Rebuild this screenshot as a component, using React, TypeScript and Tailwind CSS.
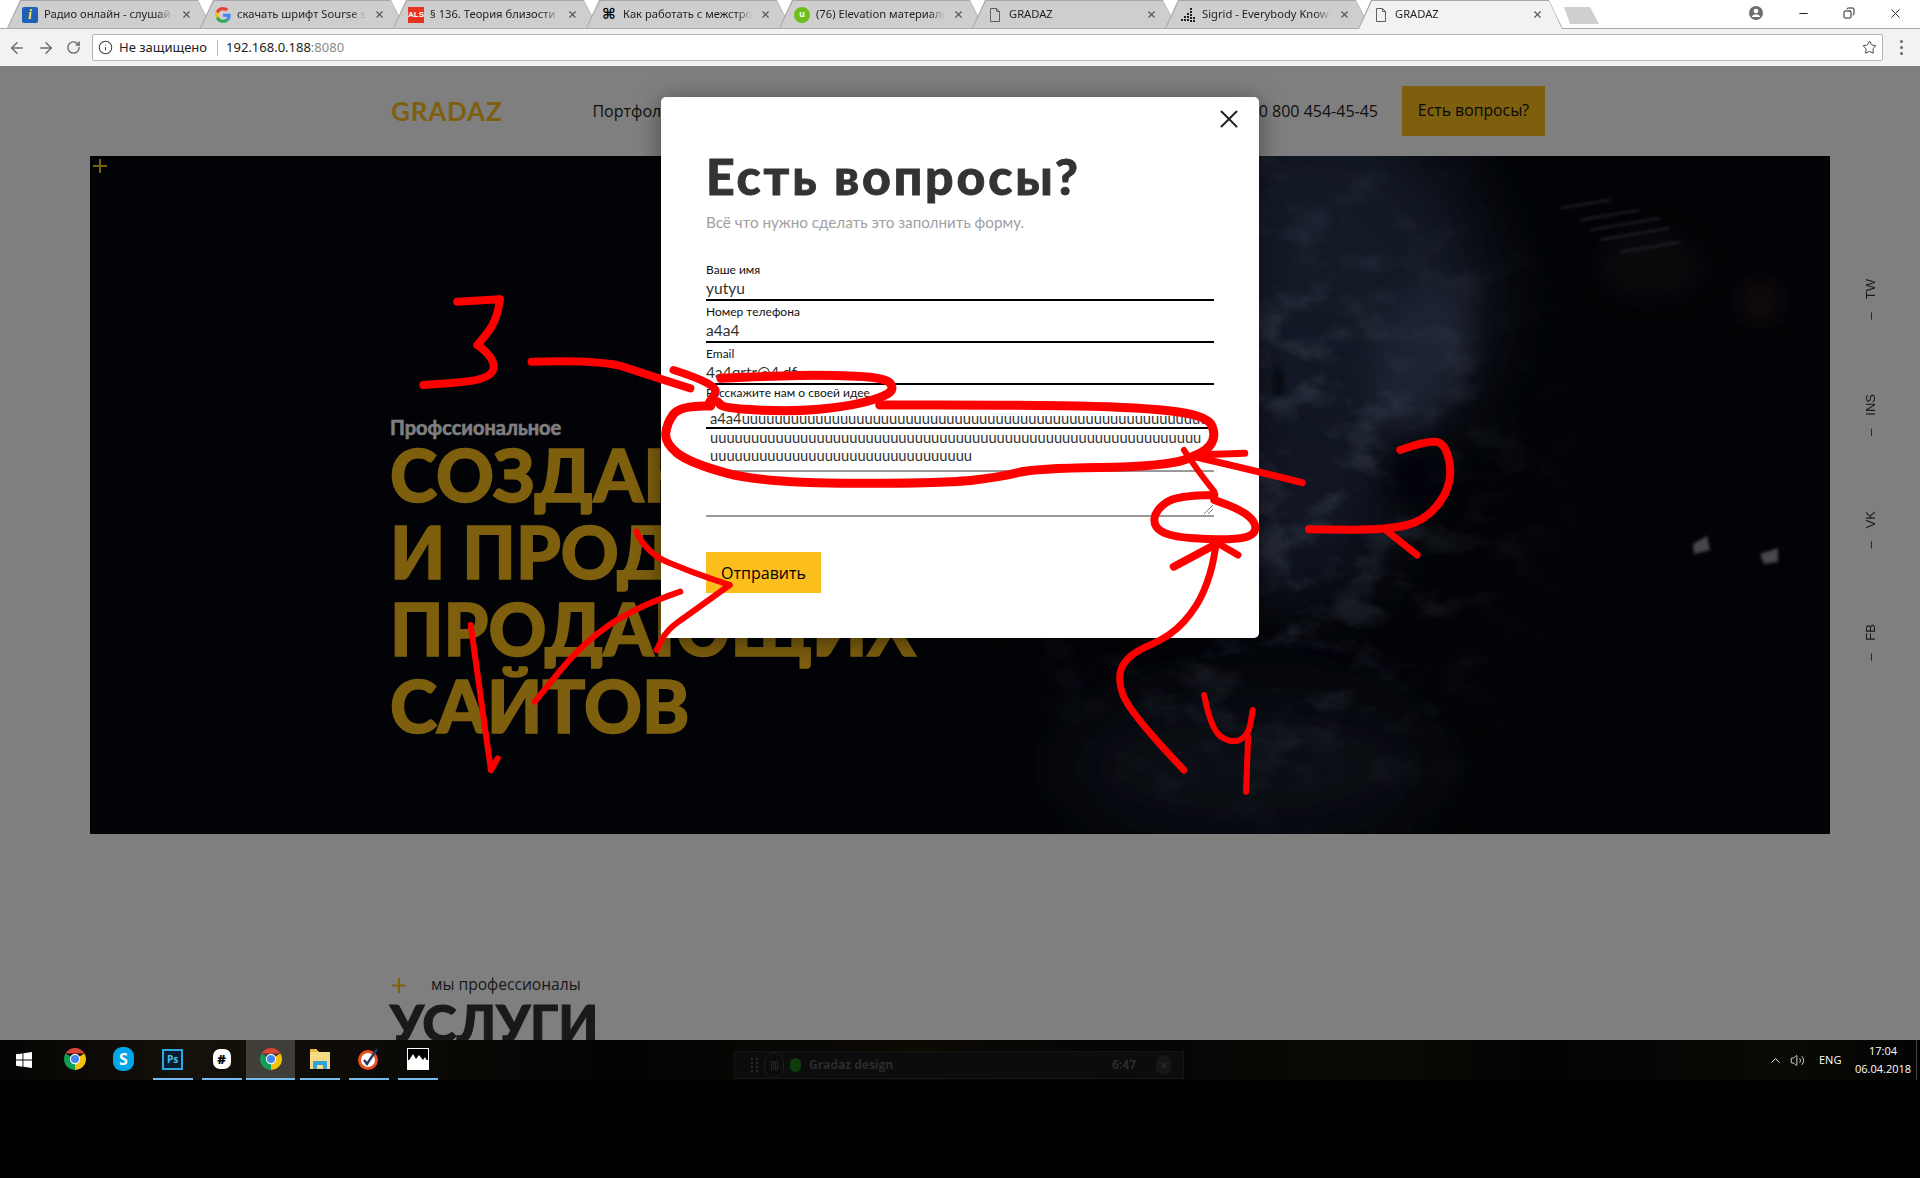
import React from "react";
import { ArrowLeft, ArrowRight, RotateCw, Info, Star, X, Minus, Copy, Volume2, ChevronUp, Pause } from "lucide-react";

const ChromeIcon = ({ s = 22 }: { s?: number }) => (
  <svg width={s} height={s} viewBox="0 0 24 24">
    <path d="M1.61 6A12 12 0 0 1 22.39 6H12Z" fill="#db4437" />
    <path d="M22.39 6A12 12 0 0 1 12 24L12 12Z" fill="#f4c20d" />
    <path d="M12 24A12 12 0 0 1 1.61 6L12 12Z" fill="#0f9d58" />
    <circle cx="12" cy="12" r="5.6" fill="#fff" />
    <circle cx="12" cy="12" r="4.4" fill="#4285f4" />
  </svg>
);

const DocIcon = () => (
  <svg width="16" height="16" viewBox="0 0 16 16" fill="none" stroke="#5f5f5f" strokeWidth="1">
    <path d="M3.5 1.5h6l3 3v10h-9z" />
    <path d="M9.5 1.5v3h3" />
  </svg>
);

const GoogleIcon = () => (
  <svg width="16" height="16" viewBox="0 0 48 48">
    <path fill="#EA4335" d="M24 9.5c3.5 0 6.6 1.2 9.1 3.600l6.800-6.800C35.800 2.400 30.300 0 24 0 14.600 0 6.500 5.400 2.600 13.200l7.900 6.200C12.400 13.600 17.700 9.500 24 9.500z" />
    <path fill="#4285F4" d="M46.900 24.500c0-1.600-.1-3.100-.4-4.500H24v9h12.900c-.6 3-2.200 5.500-4.700 7.200l7.700 6c4.500-4.200 7-10.300 7-17.700z" />
    <path fill="#FBBC05" d="M10.500 28.600c-.5-1.400-.8-3-.8-4.600s.3-3.200.8-4.600l-7.900-6.200C.9 16.500 0 20.100 0 24s.9 7.500 2.600 10.800l7.900-6.200z" />
    <path fill="#34A853" d="M24 48c6.500 0 11.900-2.100 15.900-5.800l-7.700-6c-2.200 1.400-4.900 2.300-8.200 2.300-6.300 0-11.600-4.200-13.500-9.900l-7.900 6.200C6.500 42.600 14.600 48 24 48z" />
  </svg>
);

const tabIcons: React.ReactNode[] = [
  <div className="w-[16px] h-[16px] rounded-[2px] bg-[#1f5fb8] flex items-center justify-center text-[#ffe23a] text-[14px] font-bold italic leading-none font-['Liberation_Serif',serif]">i</div>,
  <GoogleIcon />,
  <div className="w-[16px] h-[16px] bg-[#e8321e] flex items-center justify-center text-white text-[8px] font-bold leading-none font-['Liberation_Sans',sans-serif]">ALS</div>,
  <div className="w-[16px] h-[16px] flex items-center justify-center text-black text-[15px] font-bold leading-none font-['DejaVu_Sans',sans-serif]">⌘</div>,
  <div className="w-[16px] h-[16px] rounded-full bg-[#6fbe1e] flex items-center justify-center text-white text-[9px] font-bold leading-none font-['Liberation_Sans',sans-serif]">u</div>,
  <DocIcon />,
  <svg width="16" height="16" viewBox="0 0 16 16" fill="#222">
    <rect x="1" y="12" width="2" height="2" /><rect x="4" y="9" width="2" height="2" /><rect x="4" y="12" width="2" height="2" />
    <rect x="7" y="6" width="2" height="2" /><rect x="7" y="9" width="2" height="2" /><rect x="7" y="12" width="2" height="2" />
    <rect x="10" y="1" width="2" height="2" /><rect x="10" y="4" width="2" height="2" /><rect x="10" y="7" width="2" height="2" /><rect x="10" y="10" width="2" height="2" /><rect x="10" y="13" width="2" height="2" />
    <rect x="13" y="10" width="2" height="2" /><rect x="13" y="13" width="2" height="2" />
  </svg>,
  <DocIcon />,
];

const tabs = [
  "Радио онлайн - слушай бесплатно",
  "скачать шрифт Sourse sans pro",
  "§ 136. Теория близости",
  "Как работать с межстрочным",
  "(76) Elevation материальный",
  "GRADAZ",
  "Sigrid - Everybody Knows",
  "GRADAZ",
];

function Tab({ title, icon, active }: { title: string; icon: React.ReactNode; active?: boolean }) {
  return (
    <div className={`relative w-[205px] -mr-[12px] shrink-0 ${active ? "h-[29px] z-10" : "h-[28px]"}`}>
      <div className="absolute inset-0 bg-[#a8a8a8] [clip-path:polygon(0_100%,13px_0,191px_0,205px_100%)]" />
      <div className={`absolute top-[1px] left-[1px] right-[1px] bottom-0 [clip-path:polygon(0_100%,13px_0,190px_0,203px_100%)] ${active ? "bg-[#f2f2f2]" : "bg-[#cecece]"}`} />
      <div className="relative flex items-center h-[28px] pt-[1px] pl-[15px]">
        <div className="w-[16px] h-[16px] shrink-0 flex items-center justify-center">{icon}</div>
        <div className="ml-[6px] w-[129px] whitespace-nowrap overflow-hidden text-[11.2px] text-[#1f1f1f] font-['Noto_Sans',sans-serif] [mask-image:linear-gradient(to_right,black_88%,transparent)]">{title}</div>
        <X size={11} strokeWidth={2.4} className="ml-[8px] text-[#555]" />
      </div>
    </div>
  );
}

function Browser() {
  return (
    <div className="shrink-0">
      <div className="h-[29px] bg-white border-b border-[#a8a8a8] flex pl-[7px]">
        {tabs.map((t, i) => (
          <Tab key={i} title={t} icon={tabIcons[i]} active={i === 7} />
        ))}
        <div className="ml-[13px] mt-[7px] w-[35px] h-[17px] bg-[#cfcfcf] [clip-path:polygon(0_0,26px_0,35px_100%,6px_100%)]" />
        <div className="ml-auto flex h-[26px] pr-[2px] items-center text-[#222]">
          <div className="w-[48px] flex justify-center">
            <svg width="14" height="14" viewBox="0 0 14 14">
              <circle cx="7" cy="7" r="7" fill="#6e6e6e" />
              <circle cx="7" cy="5" r="2.3" fill="#fff" />
              <path d="M2.800 11c.6-2 2.400-2.800 4.200-2.800s3.600.8 4.200 2.800z" fill="#fff" />
            </svg>
          </div>
          <div className="w-[46px] flex justify-center"><Minus size={13} strokeWidth={2} /></div>
          <div className="w-[46px] flex justify-center"><Copy size={12} strokeWidth={2} className="-scale-x-100" /></div>
          <div className="w-[46px] flex justify-center"><X size={15} strokeWidth={1.5} /></div>
        </div>
      </div>
      <div className="h-[37px] bg-[#f2f2f2] flex items-center font-['Noto_Sans',sans-serif]">
        <div className="w-[92px] flex items-center pl-[8px] gap-[11px] text-[#6b6b6b]">
          <ArrowLeft size={18} strokeWidth={2} />
          <ArrowRight size={18} strokeWidth={2} />
          <RotateCw size={15} strokeWidth={2.2} />
        </div>
        <div className="w-[1791px] h-[27px] bg-white border border-[#b4b4b4] rounded-[2px] flex items-center pl-[5px] pr-[5px]">
          <Info size={15} strokeWidth={1.7} className="text-[#444]" />
          <span className="ml-[6px] text-[13px] text-[#222]">Не защищено</span>
          <span className="ml-[10px] w-px h-[16px] bg-[#bdbdbd]" />
          <span className="ml-[8px] text-[13px] text-[#222]">192.168.0.188<span className="text-[#8a8a8a]">:8080</span></span>
          <Star size={15} strokeWidth={1.6} className="ml-auto text-[#444]" />
        </div>
        <div className="ml-[17px] flex flex-col gap-[3px]">
          <span className="w-[3px] h-[3px] rounded-full bg-[#666]" />
          <span className="w-[3px] h-[3px] rounded-full bg-[#666]" />
          <span className="w-[3px] h-[3px] rounded-full bg-[#666]" />
        </div>
      </div>
    </div>
  );
}

function HeroTexture() {
  return (
    <svg className="absolute inset-0 w-full h-full" viewBox="0 0 1740 678" preserveAspectRatio="none">
      <defs>
        <filter id="b40" x="-50%" y="-50%" width="200%" height="200%"><feGaussianBlur stdDeviation="38" /></filter>
        <filter id="b14" x="-50%" y="-50%" width="200%" height="200%"><feGaussianBlur stdDeviation="14" /></filter>
        <filter id="b2" x="-50%" y="-50%" width="200%" height="200%"><feGaussianBlur stdDeviation="1.500" /></filter>
        <filter id="noise" x="0" y="0" width="100%" height="100%">
          <feTurbulence type="fractalNoise" baseFrequency="0.02 0.03" numOctaves="5" seed="7" />
          <feColorMatrix values="0 0 0 0 0.26  0 0 0 0 0.32  0 0 0 0 0.48  3.600 0 0 0 -1.750" />
        </filter>
        <radialGradient id="fade" cx="0.5" cy="0.5" r="0.5">
          <stop offset="0.3" stopColor="#fff" />
          <stop offset="1" stopColor="#000" />
        </radialGradient>
        <mask id="m"><ellipse cx="1180" cy="300" rx="320" ry="430" fill="url(#fade)" /></mask>
      </defs>
      <ellipse cx="1210" cy="140" rx="190" ry="190" fill="#28324c" filter="url(#b40)" />
      <ellipse cx="1180" cy="340" rx="130" ry="110" fill="#232c44" filter="url(#b40)" />
      <ellipse cx="1160" cy="610" rx="190" ry="80" fill="#151b2a" filter="url(#b40)" />
      <ellipse cx="1330" cy="195" rx="45" ry="75" fill="#3a4562" filter="url(#b14)" transform="rotate(20 1330 195)" />
      <ellipse cx="1670" cy="145" rx="18" ry="18" fill="#3e2229" filter="url(#b14)" opacity="0.8" />
      <ellipse cx="1560" cy="110" rx="50" ry="30" fill="#251b21" filter="url(#b14)" opacity="0.6" />
      <rect width="1740" height="678" fill="#000" filter="url(#noise)" mask="url(#m)" opacity="0.35" />
      <ellipse cx="1325" cy="322" rx="30" ry="26" fill="#030308" filter="url(#b14)" />
      <ellipse cx="1188" cy="225" rx="6" ry="15" fill="#05070d" filter="url(#b2)" opacity="0.5" />
      <g stroke="#8c8ea4" strokeWidth="1.500" opacity="0.6" filter="url(#b2)" fill="none">
        <path d="M1490 64l60-10" /><path d="M1500 74l70-12" /><path d="M1510 84l70-12" /><path d="M1530 96l60-10" /><path d="M1470 52l50-8" />
      </g>
      <path d="M1603 388l14-8 3 14-16 4z" fill="#b9bccb" filter="url(#b2)" opacity="0.75" />
      <path d="M1670 398l18-6 0 14-14 2z" fill="#b9bccb" filter="url(#b2)" opacity="0.75" />
      <path d="M1155 124l12 4 0 10-12-2z" fill="#9da3b8" filter="url(#b2)" opacity="0.6" />
    </svg>
  );
}

function Page() {
  return (
    <div className="relative h-[974px] overflow-hidden bg-white font-['Open_Sans',sans-serif]">
      <header className="h-[90px] flex items-center pl-[391px] pr-[375px]">
        <span className="text-[26px] leading-none font-bold tracking-[0.8px] text-[#fcbe1c] font-['Lato',sans-serif]">GRADAZ</span>
        <span className="ml-[90px] text-[16px] text-[#222]">Портфолио</span>
        <span className="ml-auto text-[16px] text-[#222]">+38 0 800 454-45-45</span>
        <span className="ml-[24px] w-[143px] h-[50px] flex items-center justify-center bg-[#fcbe1c] text-[15.800px] text-[#111]">Есть вопросы?</span>
      </header>
      <div className="flex">
        <section className="relative ml-[90px] w-[1740px] h-[678px] bg-[#05060c] overflow-hidden">
          <HeroTexture />
          <span className="absolute left-[2px] top-[2px] text-[#fcbe1c]">
            <svg width="16" height="16" viewBox="0 0 16 16" stroke="currentColor" strokeWidth="2"><path d="M8 1v14M1 8h14" /></svg>
          </span>
          <div className="relative pl-[300px] pt-[257px] font-['Lato',sans-serif]">
            <div className="text-[20px] leading-[28px] font-bold text-white [-webkit-text-stroke:0.5px_#fff]">Профссиональное</div>
            <div className="-mt-[5px] text-[71.500px] leading-[77px] font-black text-[#fcbe1c] [-webkit-text-stroke:1.5px_#fcbe1c] whitespace-nowrap">
              <div>СОЗДАНИЕ</div>
              <div>И ПРОДВИЖЕНИЕ</div>
              <div>ПРОДАЮЩИХ</div>
              <div>САЙТОВ</div>
            </div>
          </div>
        </section>
        <aside className="w-[90px] pr-[10px] flex flex-col items-center gap-[75px] pt-[123px] text-[13px] text-[#333] font-['Liberation_Sans',sans-serif]">
          {["TW", "INS", "VK", "FB"].map((s) => (
            <span key={s} className="[writing-mode:vertical-rl] rotate-180 leading-none whitespace-nowrap">
              <span className="me-[13px]">–</span>{s}
            </span>
          ))}
        </aside>
      </div>
      <div className="pl-[392px] pt-[141px]">
        <div className="flex items-center h-[20px]">
          <svg width="14" height="15" viewBox="0 0 14 15" stroke="#fcbe1c" strokeWidth="2"><path d="M7 0v15M0 7.500h14" /></svg>
          <span className="ml-[25px] text-[15.600px] text-[#333]">мы профессионалы</span>
        </div>
        <div className="-ml-[2px] mt-[2px] text-[52px] leading-[50px] font-black text-[#333] [-webkit-text-stroke:1px_#333] font-['Lato',sans-serif]">УСЛУГИ</div>
      </div>
      <div className="absolute inset-0 bg-black/50 flex justify-center pt-[31px]">
        <Modal />
      </div>
    </div>
  );
}

function Field({ label, value }: { label: string; value: string }) {
  return (
    <div className="h-[42px] flex flex-col pt-[3px]">
      <div className="h-[16px] text-[12px] leading-[15px] text-[#111] whitespace-nowrap">{label}</div>
      <div className="h-[21px] text-[15.500px] leading-[21px] text-[#333] border-b-2 border-black box-content">{value}</div>
    </div>
  );
}

function Modal() {
  return (
    <div className="w-[598px] h-[541px] bg-white rounded-[5px] shadow-[0_4px_24px_rgba(0,0,0,0.45)] relative px-[45px] pt-[54px] font-['Lato',sans-serif]">
      <X size={30} strokeWidth={1.6} className="absolute right-[15px] top-[7px] text-[#222]" />
      <h1 className="text-[50px] leading-[50px] font-black tracking-[2.8px] text-[#333] [-webkit-text-stroke:0.8px_#333] whitespace-nowrap">Есть вопросы?</h1>
      <p className="mt-[10px] h-[22px] text-[15.200px] leading-[22px] text-[#a0a0a0]">Всё что нужно сделать это заполнить форму.</p>
      <div className="mt-[28px] -mb-[2px]" />
      <Field label="Ваше имя" value="yutyu" />
      <Field label="Номер телефона" value="a4a4" />
      <Field label="Email" value="4a4qrtr@4.df" />
      <div>
        <div className="h-[16px] text-[12px] leading-[16px] text-[#111]">Расскажите нам о своей идее</div>
        <div className="mt-[8px] h-[18px] pl-[4px] text-[14.700px] leading-[18px] text-[#333] border-b-2 border-black box-content whitespace-nowrap overflow-hidden">a4a4uuuuuuuuuuuuuuuuuuuuuuuuuuuuuuuuuuuuuuuuuuuuuuuuuuuuuuuuu</div>
        <div className="pl-[4px] text-[14.700px] leading-[17.500px] text-[#333] border-b-2 border-[#999] h-[41px] box-content whitespace-nowrap">
          <div>uuuuuuuuuuuuuuuuuuuuuuuuuuuuuuuuuuuuuuuuuuuuuuuuuuuuuuuuuuuu</div>
          <div>uuuuuuuuuuuuuuuuuuuuuuuuuuuuuuuu</div>
        </div>
        <div className="relative h-[43px] border-b-2 border-[#999] box-content">
          <svg className="absolute right-[1px] bottom-[1px]" width="9" height="9" viewBox="0 0 9 9" stroke="#555" strokeWidth="0.8"><path d="M0 9L9 0M4 9L9 4" /></svg>
        </div>
      </div>
      <button className="mt-[35px] w-[115px] h-[41px] bg-[#fcbe1c] text-[16px] text-black font-['Open_Sans',sans-serif]">Отправить</button>
    </div>
  );
}

const smooth = (p: number[][]) => {
  let d = `M${p[0][0]} ${p[0][1]}`;
  for (let i = 1; i < p.length - 1; i++) {
    const mx = (p[i][0] + p[i + 1][0]) / 2;
    const my = (p[i][1] + p[i + 1][1]) / 2;
    d += ` Q${p[i][0]} ${p[i][1]} ${mx} ${my}`;
  }
  const l = p[p.length - 1];
  return d + ` L${l[0]} ${l[1]}`;
};

const strokes: { w: number; p: number[][] }[] = [
  { w: 8, p: [[55, 35], [118, 28]] },
  { w: 8, p: [[118, 28], [115, 90], [85, 165]] },
  { w: 8, p: [[85, 165], [112, 205], [105, 270], [5, 285]] },
  { w: 8, p: [[165, 215], [270, 210], [330, 250], [400, 295]] },
  { w: 8, p: [[375, 240], [445, 285], [428, 335]] },
  { w: 9, p: [[445, 265], [520, 258], [600, 255], [690, 262], [702, 300], [680, 325], [630, 350], [550, 365], [450, 355], [440, 335]] },
  { w: 9, p: [[430, 348], [385, 345], [365, 400], [362, 460], [400, 520], [510, 580], [780, 580], [860, 560], [910, 535], [1100, 530], [1160, 490], [1178, 440], [1165, 375], [1050, 350], [850, 345], [680, 345]] },
  { w: 7, p: [[1305, 578], [1240, 545], [1145, 500]] },
  { w: 7, p: [[1220, 490], [1145, 495]] },
  { w: 6, p: [[1130, 480], [1150, 540], [1175, 605]] },
  { w: 8, p: [[1450, 480], [1490, 452], [1518, 460], [1528, 580], [1490, 690], [1430, 720], [1315, 718]] },
  { w: 7, p: [[1430, 722], [1475, 795]] },
  { w: 8, p: [[1175, 615], [1120, 615], [1088, 660], [1085, 710], [1110, 740], [1180, 750], [1232, 742], [1238, 700], [1215, 660], [1175, 630]] },
  { w: 7, p: [[1130, 1440], [1050, 1270], [1030, 1160], [1050, 1090], [1110, 1040], [1150, 950], [1170, 850], [1178, 760]] },
  { w: 8, p: [[1115, 830], [1180, 760]] },
  { w: 7, p: [[1180, 760], [1210, 795]] },
  { w: 6, p: [[1160, 1215], [1170, 1320], [1200, 1360], [1225, 1340], [1232, 1260]] },
  { w: 6, p: [[1225, 1340], [1222, 1505]] },
  { w: 6, p: [[75, 1005], [95, 1300], [105, 1440]] },
  { w: 6, p: [[105, 1440], [115, 1405]] },
  { w: 6, p: [[320, 725], [335, 790], [400, 845], [458, 885]] },
  { w: 6, p: [[458, 885], [400, 970], [365, 1020], [350, 1080]] },
  { w: 6, p: [[385, 905], [320, 950], [240, 1060], [170, 1235]] },
];

function Annotations() {
  return (
    <svg className="absolute left-[420px] top-[290px] w-[1060px] h-[520px] overflow-visible pointer-events-none" viewBox="0 0 1568 1560" preserveAspectRatio="none" fill="none" stroke="#ff0000" strokeLinecap="round" strokeLinejoin="round">
      {strokes.map((s, i) => (
        <path key={i} d={smooth(s.p)} strokeWidth={s.w} vectorEffect="non-scaling-stroke" />
      ))}
    </svg>
  );
}

function TaskIcon({ children, on, active }: { children: React.ReactNode; on?: boolean; active?: boolean }) {
  return (
    <div className={`w-[49px] h-full flex justify-center ${active ? "bg-white/20" : ""}`}>
      <div className={`h-full flex items-center justify-center border-b-2 ${active ? "w-full" : "w-[40px]"} ${on ? "border-[#76b9ed]" : "border-transparent"}`}>
        {children}
      </div>
    </div>
  );
}

function Taskbar() {
  return (
    <div className="h-[40px] shrink-0 flex items-center text-white bg-[linear-gradient(90deg,#050403_0%,#15110a_10%,#0c0a06_20%,#030303_32%,#0d0a04_48%,#040404_58%,#0c0a05_72%,#030303_80%,#0b0905_93%,#030303_100%)] font-['Open_Sans',sans-serif]">
      <div className="w-[48px] h-full flex items-center justify-center mr-[2px]">
        <svg width="16" height="16" viewBox="0 0 16 16" fill="#fff"><path d="M0 2.300 6.500 1.400V7.600H0ZM7.400 1.300 16 0V7.600H7.400ZM0 8.500H6.500V14.700L0 13.800ZM7.400 8.500H16V16L7.400 14.800Z" /></svg>
      </div>
      <TaskIcon><ChromeIcon /></TaskIcon>
      <TaskIcon>
        <div className="w-[21px] h-[24px] rounded-[9px] bg-[#00a6e8] flex items-center justify-center text-white text-[16px] font-bold leading-none">S</div>
      </TaskIcon>
      <TaskIcon on>
        <div className="w-[21px] h-[21px] border-2 border-[#2fa8e0] bg-[#071c2e] flex items-center justify-center text-[#4cc0f2] text-[10px] font-bold leading-none">Ps</div>
      </TaskIcon>
      <TaskIcon on>
        <div className="w-[18px] h-[20px] rounded-[7px] bg-white flex items-center justify-center text-black text-[13px] font-black leading-none">#</div>
      </TaskIcon>
      <TaskIcon on active><ChromeIcon /></TaskIcon>
      <TaskIcon on>
        <svg width="22" height="22" viewBox="0 0 22 22"><path d="M1 2h7l2 2h11v17H1z" fill="#f5dc82" /><rect x="1" y="1" width="7" height="3" fill="#e6bd3e" /><path d="M4 21v-8h14v8h-4v-4h-6v4z" fill="#2fa5de" /></svg>
      </TaskIcon>
      <TaskIcon on>
        <svg width="24" height="24" viewBox="0 0 24 24"><circle cx="11" cy="13" r="10" fill="#ea4e1f" /><circle cx="11" cy="13" r="7" fill="#fff" /><path d="M7 13l3 4 10-15" fill="none" stroke="#223a66" strokeWidth="2.400" /></svg>
      </TaskIcon>
      <TaskIcon on>
        <svg width="22" height="22" viewBox="0 0 22 22"><rect width="22" height="22" fill="#fff" /><rect x="1" y="1" width="20" height="11" fill="#000" /><path d="M1 14l5-8 3 5 3-4 4 5 2-3 2 4v8H1z" fill="#fff" /></svg>
      </TaskIcon>
      <div className="ml-[292px] w-[450px] h-[28px] mt-[10px] flex items-center bg-[#0c0c0c] border border-[#151515] text-[#2b2b2b] font-bold text-[12px] pl-[16px]">
        <span className="w-[7px] h-[14px] border-x-2 border-dotted border-[#2a2a2a]" />
        <span className="ml-[6px] w-[20px] h-[26px] rounded-full border border-[#1c1c1c] flex items-center justify-center"><Pause size={11} /></span>
        <span className="ml-[6px] w-[11px] h-[14px] rounded-full bg-[#0c3b0c]" />
        <span className="ml-[8px]">Gradaz design</span>
        <span className="ml-auto">6:47</span>
        <span className="ml-[20px] mr-[12px] w-[15px] h-[20px] rounded-full bg-[#161616] flex items-center justify-center text-[9px]">x</span>
      </div>
      <div className="ml-auto flex items-center h-full">
        <ChevronUp size={15} strokeWidth={1.5} />
        <Volume2 size={15} strokeWidth={1.3} className="ml-[7px]" />
        <span className="ml-[14px] text-[11px] w-[22px]">ENG</span>
        <div className="ml-[11px] w-[62px] flex flex-col items-center text-[11px] leading-[18px]">
          <span>17:04</span>
          <span>06.04.2018</span>
        </div>
        <span className="ml-[2px] mr-[3px] w-px h-full bg-[#444]" />
      </div>
    </div>
  );
}

export default function App() {
  return (
    <div className="relative w-[1920px] h-[1178px] bg-black flex flex-col overflow-hidden">
      <Browser />
      <Page />
      <Taskbar />
      <div className="flex-1 bg-black" />
      <Annotations />
    </div>
  );
}
